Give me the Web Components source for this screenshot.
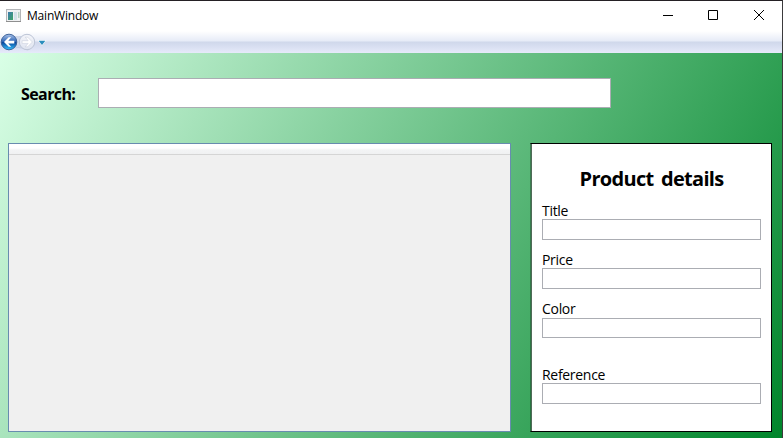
<!DOCTYPE html>
<html lang="en"><head><meta charset="utf-8"><title>MainWindow</title>
<style>html,body{margin:0;width:783px;height:438px;overflow:hidden;font-family:"Open Sans","Noto Sans",sans-serif;color:#000}</style>
</head><body><main-window></main-window>
<script>
const define=(name,html)=>{
  const t=document.createElement('template');t.innerHTML=html;
  customElements.define(name,class extends HTMLElement{
    constructor(){super();this.attachShadow({mode:'open'}).append(t.content.cloneNode(true));}
  });
};
define('title-bar',`<style>
:host{display:flex;height:30px;background:#fff;align-items:center;padding-left:6px;box-sizing:border-box}
.t{font-size:12px;line-height:16px;margin-left:5px;letter-spacing:-.2px;flex:1}
.b{width:46px;height:30px;display:block}
</style>
<svg width="16" height="14" viewBox="0 0 16 14"><defs><linearGradient id="g" x2="1" y2="1"><stop stop-color="#3c7ab0"/><stop offset="1" stop-color="#3fa564"/></linearGradient></defs><rect x=".5" y=".5" width="14" height="12" fill="#f0f1f2" stroke="#b3b5b8"/><path d="M0 12.5H15" stroke="#8f8f8f"/><rect x="2" y="3" width="5" height="8" fill="url(#g)"/><path d="M8 3h3v8H8z" fill="#d3e2e8"/><path d="M12 3h1.5v6H12z" fill="#b5d4c4"/></svg>
<span class="t"><slot></slot></span>
<svg class="b" viewBox="0 0 46 30"><path d="M19 14.5h10" stroke="#000"/></svg>
<svg class="b" viewBox="0 0 46 30"><path d="M18.5 9.5h9v9h-9z" fill="none" stroke="#000"/></svg>
<svg class="b" viewBox="0 0 46 30"><path d="M18 9l10 10M28 9l-10 10" stroke="#000"/></svg>`);
define('nav-bar',`<style>
:host{display:block;height:22px;background:linear-gradient(#fff 0,#e6ebf7 10px,#d0d8eb 11px,#d5dcef 14px,#e6eafa 22px)}svg{display:block}
</style>
<svg width="50" height="22" viewBox="0 0 50 22"><defs>
<linearGradient id="b" x2="0" y2="1"><stop stop-color="#a9c1e8"/><stop offset=".48" stop-color="#2d64b5"/><stop offset=".52" stop-color="#08459b"/><stop offset="1" stop-color="#35c4ff"/></linearGradient>
<linearGradient id="w" x2="0" y2="1"><stop stop-color="#f4f5fa"/><stop offset="1" stop-color="#dfe4f0"/></linearGradient></defs>
<path d="M7 3.5Q18 8 29 3.5L34 9v5l-6 5Q18 14 8 19z" fill="#d2daec" stroke="#c1cade" stroke-width=".7"/>
<circle cx="9" cy="11" r="7.8" fill="url(#b)" stroke="#345b94" stroke-width=".9"/>
<path d="M4 11l4.7-4.8h2.5L8.3 9.7h6v2.7h-6l2.9 3.4H8.7z" fill="#fff"/>
<circle cx="27" cy="11" r="7.7" fill="url(#w)" stroke="#bdc5d6"/>
<path d="M32.4 11l-4.7-4.8h-2.5l2.9 3.5h-6v2.7h6l-2.9 3.4h2.5z" fill="#fff" stroke="#c9cedc" stroke-width=".6"/>
<path d="M37.5 9h9L42 14.8z" fill="#fff"/><path d="M38.6 9.8h6.8L42 14z" fill="#2b8dbd"/></svg>`);
define('text-field',`<style>
:host{display:block;box-sizing:border-box;border:1px solid #abadb3;background:#fff;height:var(--field-height,21px)}
</style>`);
define('search-row',`<style>
:host{display:flex;align-items:center;height:30px;padding-left:21px}
label{width:77px;font-size:16px;font-weight:700;line-height:22px;padding-top:2px;letter-spacing:-.6px;box-sizing:border-box}
text-field{width:513px;--field-height:30px}
</style><label><slot></slot></label><text-field></text-field>`);
define('product-list',`<style>
:host{display:block;box-sizing:border-box;width:503px;height:289px;border:1px solid #688caf;background:#f0f0f0}
div{height:10px;background:linear-gradient(#fff 0,#fff 40%,#f3f4f5 60%,#f0f1f2);border-bottom:1px solid #d5d5d5}
</style><div></div>`);
define('field-row',`<style>
:host{display:block}
label{display:block;font-size:14px;line-height:17px;height:var(--label-height,17px);letter-spacing:-.3px}
</style><label><slot></slot></label><text-field></text-field>`);
define('product-details',`<style>
:host{display:block;box-sizing:border-box;width:242px;height:289px;border:1px solid #000;border-left-color:rgba(0,0,0,.3);background:#fff;background-clip:padding-box;box-shadow:inset 1px 0 #4f6b57;padding:19px 10px 0 11px}
h2{margin:0 0 8px;font-size:20px;line-height:31px;height:31px;font-weight:700;text-align:center;letter-spacing:-.7px;word-spacing:3px}
field-row{margin-bottom:11px}
.c{margin-bottom:28px;--field-height:20px;--label-height:18px}
</style><h2>Product details</h2><field-row>Title</field-row><field-row>Price</field-row><field-row class="c">Color</field-row><field-row>Reference</field-row>`);
define('main-window',`<style>
:host{display:flex;flex-direction:column;width:783px;height:438px;box-sizing:border-box;border-top:1px solid #242024;border-right:1px solid #3b3a3c}
main{flex:1;background:linear-gradient(120deg,#d9ffe6,#00852b);padding-top:25px}
.row{display:flex;gap:19px;padding:35px 0 0 8px}
</style><title-bar>MainWindow</title-bar><nav-bar></nav-bar>
<main><search-row>Search:</search-row><div class="row"><product-list></product-list><product-details></product-details></div></main>`);
</script></body></html>
